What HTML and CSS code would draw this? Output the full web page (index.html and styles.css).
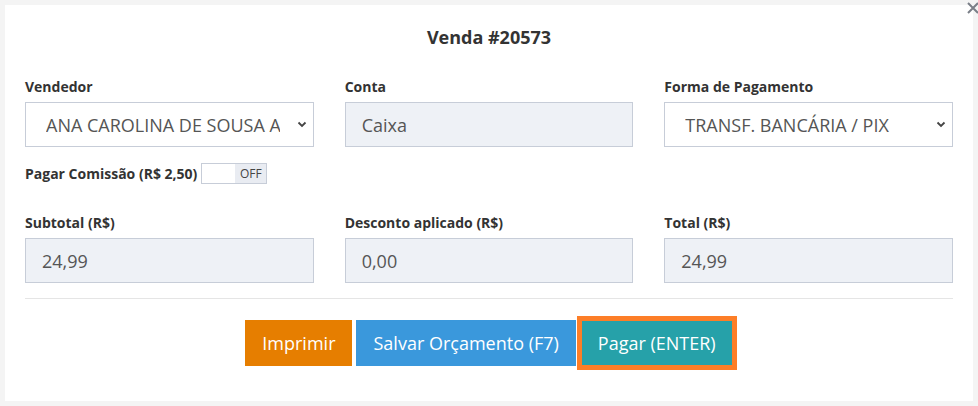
FILE: index.html
```html
<!DOCTYPE html>
<html lang="pt-BR">
<head>
    <meta charset="UTF-8">
    <meta name="viewport" content="width=device-width, initial-scale=1.0">
    <title>Venda #20573</title>
    <link rel="stylesheet" href="styles.css">
</head>
<body>
    <div class="modal">
        <button class="close" type="button" aria-label="Fechar">
            <svg width="12" height="12" viewBox="0 0 12 12"><path d="M1 1L11 11M11 1L1 11" stroke="#7a7f88" stroke-width="2"/></svg>
        </button>
        <h3 class="title">Venda #20573</h3>

        <div class="row">
            <div class="field">
                <label>Vendedor</label>
                <div class="select-wrap">
                    <select class="control">
                        <option>ANA CAROLINA DE SOUSA ALVES</option>
                    </select>
                    <svg class="caret" width="10" height="7" viewBox="0 0 10 7"><path d="M1.5 1.5L5 5L8.5 1.5" fill="none" stroke="#444" stroke-width="1.8"/></svg>
                </div>
            </div>
            <div class="field">
                <label>Conta</label>
                <input class="control" type="text" value="Caixa" readonly>
            </div>
            <div class="field">
                <label>Forma de Pagamento</label>
                <div class="select-wrap">
                    <select class="control">
                        <option>TRANSF. BANCÁRIA / PIX</option>
                    </select>
                    <svg class="caret" width="10" height="7" viewBox="0 0 10 7"><path d="M1.5 1.5L5 5L8.5 1.5" fill="none" stroke="#444" stroke-width="1.8"/></svg>
                </div>
            </div>
        </div>

        <div class="commission">
            <label>Pagar Comissão (R$ 2,50)</label>
            <div class="toggle">
                <span class="toggle-handle"></span>
                <span class="toggle-off">OFF</span>
            </div>
        </div>

        <div class="row row-totals">
            <div class="field">
                <label>Subtotal (R$)</label>
                <input class="control" type="text" value="24,99" readonly>
            </div>
            <div class="field">
                <label>Desconto aplicado (R$)</label>
                <input class="control" type="text" value="0,00" readonly>
            </div>
            <div class="field">
                <label>Total (R$)</label>
                <input class="control" type="text" value="24,99" readonly>
            </div>
        </div>

        <hr>

        <div class="actions">
            <button class="btn btn-print" type="button">Imprimir</button>
            <button class="btn btn-save" type="button">Salvar Orçamento (F7)</button>
            <button class="btn btn-pay" type="button">Pagar (ENTER)</button>
        </div>
    </div>
</body>
</html>
```

FILE: styles.css
```css
body {
    margin: 0;
    padding: 5px;
    background-color: #f4f4f4;
    font-family: "Open Sans", Arial, sans-serif;
    color: #333;
}
.modal {
    position: relative;
    width: 968px;
    height: 396px;
    box-sizing: border-box;
    padding: 20px;
    background: white;
}
.close {
    position: absolute;
    top: -3px;
    right: -6px;
    padding: 0;
    border: none;
    background: none;
}
.title {
    margin: 0 0 29px;
    font-size: 18px;
    line-height: 24px;
    font-weight: 700;
    text-align: center;
    color: #333;
}
.row {
    display: grid;
    grid-template-columns: 1fr 1fr 1fr;
    column-gap: 31px;
}
.field label {
    display: block;
    margin-bottom: 6px;
    font-size: 14px;
    line-height: 18px;
    font-weight: 700;
}
.control {
    display: block;
    width: 100%;
    height: 45px;
    box-sizing: border-box;
    padding: 0 16px;
    border: 1px solid #c7cdd8;
    border-radius: 0;
    background-color: #eef1f6;
    font-family: "Open Sans", Arial, sans-serif;
    font-size: 18px;
    color: #555;
    outline: none;
}
.select-wrap {
    position: relative;
}
select.control {
    appearance: none;
    -webkit-appearance: none;
    padding: 0 33px 0 20px;
    background-color: white;
}
.caret {
    position: absolute;
    right: 7px;
    top: 19px;
}
.commission {
    display: flex;
    align-items: center;
    gap: 4px;
    margin-top: 16px;
}
.commission label {
    font-size: 14px;
    font-weight: 700;
}
.toggle {
    display: flex;
    width: 66px;
    height: 21px;
    box-sizing: border-box;
    border: 1px solid #c7cdd8;
}
.toggle-handle {
    width: 33px;
    background: white;
}
.toggle-off {
    flex: 1;
    background: #e9ecf2;
    font-size: 12px;
    line-height: 19px;
    text-align: center;
    color: #444;
}
.row-totals {
    margin-top: 30px;
}
hr {
    margin: 15px 0 0;
    border: none;
    border-top: 1px solid #e5e5e5;
}
.actions {
    display: flex;
    justify-content: center;
    align-items: center;
    gap: 4px;
    height: 54px;
    margin-top: 17px;
}
.btn {
    height: 46px;
    padding: 0 16px;
    border: 1px solid transparent;
    color: white;
    font-family: "Open Sans", Arial, sans-serif;
    font-size: 18px;
    cursor: pointer;
}
.btn-print {
    background-color: #e67e00;
}
.btn-save {
    background-color: #3a98dc;
}
.btn-pay {
    margin-left: 1px;
    border-color: #fd7e27;
    background-color: #26a1a9;
    box-shadow: 0 0 0 4px #fd7e27;
}
```
